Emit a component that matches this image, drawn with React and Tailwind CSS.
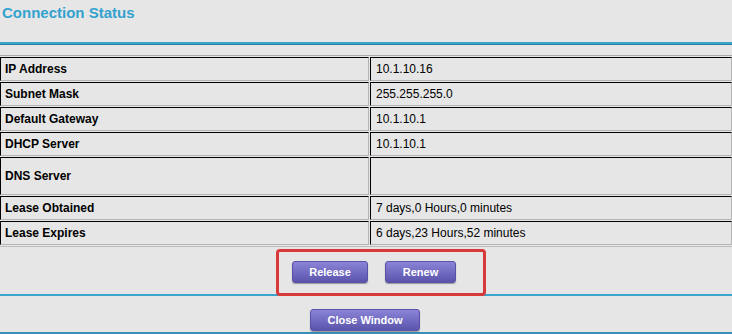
import React from "react";

const rows = [
  ["IP Address", "10.1.10.16", "h-[24px]"],
  ["Subnet Mask", "255.255.255.0", "h-[24px]"],
  ["Default Gateway", "10.1.10.1", "h-[24px]"],
  ["DHCP Server", "10.1.10.1", "h-[24px]"],
  ["DNS Server", "", "h-[38px]"],
  ["Lease Obtained", "7 days,0 Hours,0 minutes", "h-[24px]"],
  ["Lease Expires", "6 days,23 Hours,52 minutes", "h-[24px]"],
];

function Btn({ children, w }) {
  return (
    <button
      className={`${w} h-[22px] rounded-[3px] bg-gradient-to-b from-[#8b84d8] to-[#5b54ab] text-white text-[11px] font-bold shadow-[0_1px_1px_rgba(0,0,0,0.35)] border border-[#5a52a8]`}
      style={{ fontFamily: "Arial, 'Liberation Sans', sans-serif" }}
    >
      {children}
    </button>
  );
}

export default function App() {
  return (
    <div
      className="w-[732px] h-[334px] bg-[#e6e6e6] overflow-hidden"
      style={{ fontFamily: "'Liberation Sans', Arial, sans-serif" }}
    >
      <div className="pl-[2px] pt-[3px] h-[42px]">
        <h1 className="text-[15px] font-bold text-[#33a2cf] leading-[19px]">Connection Status</h1>
      </div>
      <div className="h-[3px] bg-[#3aa5cc] border-b border-[#2d7f9f]" />
      <div className="h-[10px]" />
      <div className="border-t border-[#a9a9a9] border-b border-b-[#bdbdbd] pt-px pb-px">
        {rows.map(([label, value, h], i) => (
          <div key={i} className={`flex ${h} ${i > 0 ? "mt-px" : ""}`}>
            <div className="w-[369px] flex items-center pl-[4px] border-t border-l border-black border-b border-r border-b-[#b4b4b4] border-r-[#b4b4b4] text-[12px] font-bold text-black">
              {label}
            </div>
            <div className="flex-1 ml-px flex items-center pl-[5px] border-t border-l border-black border-b border-r border-b-[#b4b4b4] border-r-[#b4b4b4] text-[12px] text-black">
              {value}
            </div>
          </div>
        ))}
      </div>
      <div className="relative h-[48px]">
        <div className="absolute left-0 right-0 top-[47px] h-[2px] bg-[#3aa5cc]" />
        <div className="absolute left-[276px] top-[2px] w-[210px] h-[47px] border-[3px] border-[#d8393b] rounded-[4px] flex items-center justify-start pl-[13px] gap-[17px] pb-[1px]">
          <Btn w="w-[76px]">Release</Btn>
          <Btn w="w-[71px]">Renew</Btn>
        </div>
      </div>
      <div className="h-[14px]" />
      <div className="flex justify-center pr-[2px]">
        <Btn w="w-[110px]">Close Window</Btn>
      </div>
      <div className="h-[2px] mt-[1px] bg-[#3a8fb5]" />
    </div>
  );
}
